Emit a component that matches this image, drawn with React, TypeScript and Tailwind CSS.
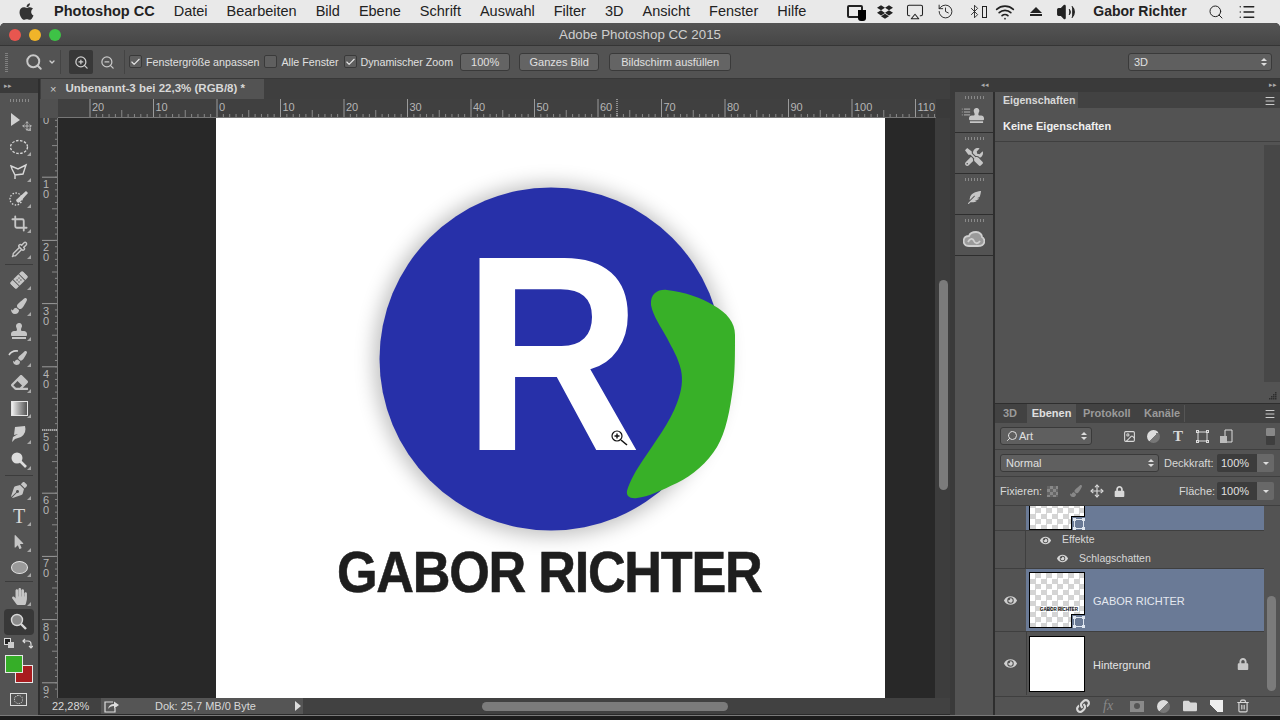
import type { ReactNode } from 'react';
import {
  Airplay,
  Bluetooth,
  Crop,
  History,
  List,
  Pipette,
  Search,
  Wifi,
  Volume2,
  ZoomIn,
  ZoomOut,
  Check,
  Move,
  ChevronDown,
  Trash2,
  Menu,
  ImageIcon,
} from 'lucide-react';
import {
  FaApple,
  FaDropbox,
  FaBandAid,
  FaPaintBrush,
  FaStamp,
  FaEraser,
  FaPenNib,
  FaMousePointer,
  FaHandPaper,
  FaEye,
  FaLock,
  FaFolder,
  FaLink,
  FaTools,
  FaFeatherAlt,
} from 'react-icons/fa';

const menuItems = ['Datei', 'Bearbeiten', 'Bild', 'Ebene', 'Schrift', 'Auswahl', 'Filter', '3D', 'Ansicht', 'Fenster', 'Hilfe'];

const rulerTop = [-2, -1, 0, 1, 2, 3, 4, 5, 6, 7, 8, 9, 10, 11];
const rulerLeft = [1, 2, 3, 4, 5, 6, 7, 8, 9];

function Corner() {
  return <span className="absolute right-[3px] bottom-[3px] border-b-[4px] border-l-[4px] border-l-transparent border-b-[#a8a8a8]" />;
}

function Tool({ children, active }: { children: ReactNode; active?: boolean }) {
  return (
    <div className={`relative mx-[4px] h-[25.7px] flex items-center justify-center text-[#c6c6c6] rounded-sm ${active ? 'bg-[#383838]' : ''}`}>
      {children}
      {!active && <Corner />}
    </div>
  );
}

function ToolSep({ tight }: { tight?: boolean }) {
  return <div className={`mx-[5px] h-[1px] bg-[#3c3c3c] ${tight ? 'my-[1px]' : 'my-[2px]'}`} />;
}

function Toolbar() {
  return (
    <div className="w-[38px] shrink-0 bg-[#535353] flex flex-col">
      <div className="h-[14px] bg-[#3a3a3a] flex items-center pl-[4px] text-[7px] text-[#aaa]">▸▸</div>
      <div className="h-[15px] flex items-center justify-center">
        <div className="w-[19px] h-[3px] bg-[repeating-linear-gradient(90deg,#8a8a8a_0_1px,transparent_1px_3px)]" />
      </div>
      <Tool>
        <svg width="20" height="18" viewBox="0 0 20 18" fill="#d0d0d0">
          <path d="M2 1 L2 14 L11 8 Z" />
        </svg>
        <Move size={10} className="absolute left-[18px] top-[13px]" />
      </Tool>
      <Tool>
        <svg width="20" height="16" viewBox="0 0 20 16" fill="none" stroke="#d8d8d8" strokeWidth="1.3" strokeDasharray="2.5 1.5">
          <ellipse cx="10" cy="8" rx="8.5" ry="6.5" />
        </svg>
      </Tool>
      <Tool>
        <svg width="20" height="18" viewBox="0 0 20 18" fill="none" stroke="#d8d8d8" strokeWidth="1.4">
          <path d="M2 3 L9 6 L17 2 L14 11 L6 12 L3 6 Z M6 12 L6 16" />
        </svg>
      </Tool>
      <Tool>
        <svg width="20" height="18" viewBox="0 0 20 18" fill="none">
          <circle cx="7" cy="10" r="6" stroke="#d8d8d8" strokeWidth="1.3" strokeDasharray="1.5 1.5" />
          <path d="M7 11 L17 2 L19 4 L11 13 Q8 15 7 11 Z" fill="#d0d0d0" />
        </svg>
      </Tool>
      <Tool>
        <Crop size={17} strokeWidth={2.6} />
      </Tool>
      <Tool>
        <Pipette size={17} />
      </Tool>
      <ToolSep />
      <Tool>
        <FaBandAid size={18} className="-rotate-45" />
      </Tool>
      <Tool>
        <FaPaintBrush size={16} />
      </Tool>
      <Tool>
        <FaStamp size={16} />
      </Tool>
      <Tool>
        <FaPaintBrush size={14} className="translate-x-[1px] translate-y-[1px]" />
        <svg className="absolute left-[4px] top-[5px]" width="12" height="8" viewBox="0 0 12 8" fill="none" stroke="#d8d8d8" strokeWidth="1.6">
          <path d="M1 6 Q4 1 10 2" />
        </svg>
      </Tool>
      <Tool>
        <FaEraser size={17} />
      </Tool>
      <Tool>
        <div className="w-[17px] h-[15px] border border-[#e5e5e5] bg-gradient-to-r from-[#f0f0f0] to-[#555555]" />
      </Tool>
      <Tool>
        <svg width="18" height="18" viewBox="0 0 18 18" fill="#cfcfcf">
          <path d="M5 2 L15 1 Q17 8 11 12 L5 14 L2 17 L3 12 L8 9 L4 10 Z" />
        </svg>
      </Tool>
      <Tool>
        <svg width="18" height="18" viewBox="0 0 18 18" fill="none">
          <circle cx="7" cy="7" r="5.5" fill="#dcdcdc" />
          <path d="M10 10 L16 16" stroke="#dcdcdc" strokeWidth="2.6" />
        </svg>
      </Tool>
      <ToolSep />
      <Tool>
        <FaPenNib size={16} />
      </Tool>
      <Tool>
        <span className="font-['Liberation_Serif',serif] text-[20px] leading-none text-[#d8d8d8]">T</span>
      </Tool>
      <Tool>
        <FaMousePointer size={14} />
      </Tool>
      <Tool>
        <div className="w-[17px] h-[13px] rounded-[50%] bg-[#9a9a9a] border border-[#e5e5e5]" />
      </Tool>
      <ToolSep tight />
      <Tool>
        <FaHandPaper size={17} />
      </Tool>
      <Tool active>
        <svg width="18" height="18" viewBox="0 0 18 18" fill="none">
          <circle cx="7" cy="7" r="5.5" fill="#8a8a8a" stroke="#d8d8d8" strokeWidth="1.4" />
          <path d="M11 11 L16 16" stroke="#d8d8d8" strokeWidth="2.4" />
        </svg>
      </Tool>
      <div className="relative flex-1">
        <div className="absolute left-[4px] top-[3px] w-[7px] h-[7px] bg-[#222] border border-[#ddd]" />
        <div className="absolute left-[8px] top-[7px] w-[6px] h-[6px] bg-[#ccc]" />
        <svg className="absolute left-[22px] top-[3px]" width="11" height="11" viewBox="0 0 11 11" fill="none" stroke="#ddd" strokeWidth="1.2">
          <path d="M1 3 H6 Q9 3 9 6 V10 M3 1 L1 3 L3 5 M7 8 L9 10 L11 8" />
        </svg>
        <div className="absolute left-[15px] top-[30px] w-[18px] h-[18px] bg-[#a81c1f] border border-[#e8e8e8]" />
        <div className="absolute left-[5px] top-[20px] w-[18px] h-[18px] bg-[#36ae28] border border-[#e8e8e8]" />
        <div className="absolute left-[10px] top-[58px] w-[17px] h-[13px] border border-[#ddd] flex items-center justify-center">
          <div className="w-[9px] h-[9px] rounded-full border border-dotted border-[#ddd]" />
        </div>
      </div>
    </div>
  );
}

function HRuler() {
  return (
    <div className="h-[19px] flex bg-[#404040]">
      <div className="w-[18px] bg-[#505050]" />
      <svg width="892" height="19" viewBox="58 0 892 19" className="text-[11px] fill-[#b5b5b5]">
        {rulerTop.map((n) => {
          const x = 217 + n * 63.5;
          return (
            <g key={n}>
              <line x1={x} x2={x} y1="0" y2="18" stroke="#9a9a9a" />
              <text x={x + 2} y="12">{Math.abs(n * 10)}</text>
              {[1, 2, 3, 4, 5, 6, 7, 8, 9].map((k) => (
                <line key={k} x1={x + k * 6.35} x2={x + k * 6.35} y1={k === 5 ? 11 : 15} y2="18" stroke="#888" />
              ))}
            </g>
          );
        })}
        <line x1="58" x2="936" y1="18.5" y2="18.5" stroke="#777" />
        <line x1="617" x2="617" y1="0" y2="18" stroke="#ddd" strokeDasharray="1 1" />
        <rect x="936" y="0" width="14" height="19" fill="#3a3a3a" />
      </svg>
    </div>
  );
}

function VRuler() {
  return (
    <svg width="18" height="580" viewBox="0 118 18 580" className="shrink-0 bg-[#404040] text-[11px] fill-[#b5b5b5]">
      <text x="3" y="124">0</text>
      {rulerLeft.map((n) => {
        const y = 114 + n * 63.2;
        return (
          <g key={n}>
            <line x1="2" x2="18" y1={y} y2={y} stroke="#9a9a9a" />
            <text x="3" y={y + 11}>{n}</text>
            <text x="3" y={y + 21}>0</text>
          </g>
        );
      })}
      {Array.from({ length: 92 }, (_, i) => (
        <line key={i} x1={i % 10 === 5 ? 12 : 15} x2="18" y1={114 + i * 6.32} y2={114 + i * 6.32} stroke="#888" />
      ))}
      <line x1="17.5" x2="17.5" y1="118" y2="698" stroke="#777" />
      <line x1="2" x2="18" y1="430" y2="430" stroke="#ddd" strokeDasharray="1 1" />
    </svg>
  );
}

function Logo() {
  return (
    <svg width="669" height="580" viewBox="216 118 669 580" className="font-['Liberation_Sans',Arial,sans-serif]">
      <defs>
        <filter id="soft" x="-20%" y="-20%" width="140%" height="140%">
          <feGaussianBlur stdDeviation="10" />
        </filter>
      </defs>
      <circle cx="550" cy="360" r="176" fill="#000" opacity="0.25" filter="url(#soft)" />
      <circle cx="551" cy="359" r="171.5" fill="#2730a9" />
      <text transform="translate(463 450) scale(0.885 1)" fontSize="279" fontWeight="700" fill="#fff">R</text>
      <path
        d="M651 305 C650 293 659 289 667 290 C685 292 702 298 713 305 C727 313 735 322 735 335 C735 355 735 372 733 387 C730 410 726 432 717 447 C708 462 692 476 677 483 C662 490 648 497 637 498 C630 499 626 496 627 491 C629 483 636 470 643 460 C655 442 670 422 677 403 C682 390 683 380 681 370 C678 357 672 348 667 338 C661 327 653 316 651 305 Z"
        fill="#38b028"
      />
      <text transform="translate(337 592) scale(0.9 1)" fontSize="58" fontWeight="700" fill="#1e1e1e" stroke="#1e1e1e" strokeWidth="0.6" textLength="473" lengthAdjust="spacing">GABOR RICHTER</text>
      <circle cx="617" cy="436" r="5" fill="#fff" stroke="#111" strokeWidth="1.2" />
      <path d="M614.5 436 H619.5 M617 433.5 V438.5" stroke="#111" strokeWidth="1.4" />
      <path d="M621 440 L627 445" stroke="#111" strokeWidth="1.6" />
    </svg>
  );
}

function DocumentArea() {
  return (
    <div className="w-[910px] shrink-0 flex flex-col bg-[#2a2a2a]">
      <div className="h-[20px] bg-[#3f3f3f] pl-[1px]">
        <div className="w-[223px] h-[20px] bg-[#535353] flex items-center text-[11.5px] font-bold text-[#d8d8d8] whitespace-nowrap">
          <span className="ml-[9px] mr-[9px] text-[11px] font-normal text-[#ccc]">×</span>
          Unbenannt-3 bei 22,3% (RGB/8) *
        </div>
      </div>
      <HRuler />
      <div className="h-[580px] flex">
        <VRuler />
        <div className="w-[877px] bg-[#282828] flex">
          <div className="w-[158px]" />
          <div className="w-[669px] h-[580px] bg-white overflow-hidden">
            <Logo />
          </div>
        </div>
        <div className="flex-1 bg-[#3d3d3d] relative">
          <div className="absolute left-[4px] top-[162px] w-[9px] h-[210px] rounded-full bg-[#7b7b7b]" />
        </div>
      </div>
      <div className="h-[16px] flex bg-[#414141] text-[11px] text-[#d8d8d8]">
        <div className="w-[61px] pl-[12px] leading-[16px]">22,28%</div>
        <div className="w-[202px] bg-[#555555] flex items-center">
          <svg width="16" height="13" viewBox="0 0 16 13" fill="none" stroke="#ddd" strokeWidth="1.2" className="ml-[3px]">
            <path d="M9 2 H1 V12 H11 V8" />
            <path d="M4 9 Q5 4 10 4 V1.5 L15 5 L10 8.5 V6 Q6 6 4 9 Z" fill="#ddd" stroke="none" />
          </svg>
          <span className="ml-[35px]">Dok: 25,7 MB/0 Byte</span>
          <span className="ml-[39px] border-y-[5px] border-l-[6px] border-y-transparent border-l-[#ddd]" />
        </div>
        <div className="flex-1 flex items-center pl-[179px]">
          <div className="w-[246px] h-[9px] rounded-full bg-[#7b7b7b]" />
        </div>
      </div>
    </div>
  );
}

function DockBox({ children }: { children: ReactNode }) {
  return (
    <div className="h-[41px] border-b border-[#2e2e2e] bg-[#535353] flex flex-col items-center text-[#c6c6c6]">
      <div className="mt-[4px] w-[19px] h-[3px] bg-[repeating-linear-gradient(90deg,#8a8a8a_0_1px,transparent_1px_3px)]" />
      <div className="flex-1 flex items-center justify-center">{children}</div>
    </div>
  );
}

function Dock() {
  return (
    <div className="w-[38px] shrink-0 bg-[#535353] flex flex-col">
      <DockBox>
        <div className="relative">
          <FaStamp size={15} className="ml-[5px]" />
          <List size={10} className="absolute -left-[3px] -top-[1px]" />
        </div>
      </DockBox>
      <DockBox>
        <FaTools size={18} />
      </DockBox>
      <DockBox>
        <FaFeatherAlt size={13} />
      </DockBox>
      <DockBox>
        <svg width="22" height="16" viewBox="0 0 22 16" fill="none" stroke="#cfcfcf" strokeWidth="1.8">
          <path d="M6 15 C1 15 0 11 1 8 C2 5 4 5 6 5 C7 2 10 1 13 1 C17 1 19 4 19 6 C21 7 22 10 21 12 C20 15 17 15 15 15 Z" fill="#9a9a9a" />
          <path d="M5 11 C7 7 10 7 11 10 C12 13 15 13 17 10" />
        </svg>
      </DockBox>
    </div>
  );
}

function UpDown() {
  return (
    <span className="flex flex-col gap-[2px]">
      <span className="border-x-[3px] border-b-[3px] border-x-transparent border-b-[#ddd]" />
      <span className="border-x-[3px] border-t-[3px] border-x-transparent border-t-[#ddd]" />
    </span>
  );
}

function Select({ label, className, icon }: { label: string; className: string; icon?: ReactNode }) {
  return (
    <div className={`h-[18px] flex items-center justify-between rounded-[3px] border border-[#3a3a3a] bg-[#5f5f5f] pl-[5px] pr-[4px] text-[11px] text-[#e0e0e0] ${className}`}>
      <span className="flex items-center gap-[1px]">
        {icon}
        {label}
      </span>
      <UpDown />
    </div>
  );
}

function PercentInput() {
  return (
    <div className="w-[57px] h-[18px] flex rounded-[2px] overflow-hidden text-[11px] text-[#e0e0e0]">
      <div className="w-[40px] bg-[#3c3c3c] pl-[4px] leading-[18px]">100%</div>
      <div className="flex-1 bg-[#686868] flex items-center justify-center">
        <span className="border-x-[3px] border-t-[3px] border-x-transparent border-t-[#ddd]" />
      </div>
    </div>
  );
}

function Thumb({ children, checker }: { children?: ReactNode; checker?: boolean }) {
  return (
    <div className={`relative w-[56px] h-[56px] border border-black ${checker ? 'bg-[repeating-conic-gradient(#d4d4d4_0_25%,#ffffff_0_50%)] bg-[length:11px_11px]' : 'bg-white'}`}>
      {children}
    </div>
  );
}

function SmartBadge() {
  return (
    <div className="absolute -right-[1px] -bottom-[1px] w-[14px] h-[14px] bg-[#6a7a96] border-l border-t border-black flex items-center justify-center">
      <svg width="12" height="12" viewBox="0 0 12 12" fill="none" stroke="#dfe6f0">
        <rect x="1.5" y="1.5" width="9" height="9" />
        <rect x="0.5" y="0.5" width="2" height="2" />
        <rect x="9.5" y="0.5" width="2" height="2" />
        <rect x="0.5" y="9.5" width="2" height="2" />
        <rect x="9.5" y="9.5" width="2" height="2" />
      </svg>
    </div>
  );
}

function EyeCell() {
  return (
    <div className="w-[31px] shrink-0 flex items-center justify-center text-[#d0d0d0]">
      <FaEye size={13} />
    </div>
  );
}

function Panels() {
  return (
    <div className="w-[285px] shrink-0 flex flex-col gap-[1px] bg-[#2e2e2e] text-[#d8d8d8]">
      <div className="h-[311px] bg-[#535353] flex flex-col">
        <div className="h-[16px] bg-[#424242] flex justify-between">
          <div className="w-[83px] bg-[#535353] pl-[8px] text-[10.6px] font-bold leading-[16px] text-[#d8d8d8]">Eigenschaften</div>
          <Menu size={12} className="mr-[4px] mt-[3px] text-[#ccc]" />
        </div>
        <div className="h-[34px] border-b border-[#3f3f3f] pl-[8px] pt-[11px] text-[11px] font-bold leading-[14px] text-[#f0f0f0]">Keine Eigenschaften</div>
        <div className="flex-1 relative">
          <div className="absolute right-0 top-[3px] w-[16px] h-[237px] bg-[#474747]" />
          <svg className="absolute right-[3px] bottom-[3px]" width="9" height="9" viewBox="0 0 9 9" fill="#2e2e2e">
            <rect x="7" y="1" width="1.5" height="1.5" />
            <rect x="5" y="3" width="1.5" height="1.5" />
            <rect x="7" y="3" width="1.5" height="1.5" />
            <rect x="3" y="5" width="1.5" height="1.5" />
            <rect x="5" y="5" width="1.5" height="1.5" />
            <rect x="7" y="5" width="1.5" height="1.5" />
            <rect x="1" y="7" width="1.5" height="1.5" />
            <rect x="3" y="7" width="1.5" height="1.5" />
            <rect x="5" y="7" width="1.5" height="1.5" />
            <rect x="7" y="7" width="1.5" height="1.5" />
          </svg>
        </div>
      </div>
      <div className="flex-1 bg-[#535353] flex flex-col">
        <div className="h-[19px] bg-[#424242] flex items-center text-[11px] font-bold text-[#9a9a9a]">
          <span className="w-[32px] pl-[8px]">3D</span>
          <span className="w-[49px] h-[19px] bg-[#535353] text-center leading-[19px] text-[#e0e0e0]">Ebenen</span>
          <span className="ml-[7px] w-[61px]">Protokoll</span>
          <span className="w-[41px] border-r border-[#555]">Kanäle</span>
          <Menu size={12} className="ml-auto mr-[4px] text-[#ccc]" />
        </div>
        <div className="h-[27px] border-b border-[#3f3f3f] flex items-center pl-[5px] text-[#d8d8d8]">
          <Select label="Art" className="w-[92px]" icon={<Search size={12} className="-scale-x-100" />} />
          <div className="ml-[31px] flex items-center gap-[11.3px]">
            <ImageIcon size={13} />
            <div className="w-[13px] h-[13px] rounded-full bg-[linear-gradient(135deg,#ddd_50%,#777_50%)]" />
            <span className="w-[13px] text-center font-['Liberation_Serif',serif] text-[15px] leading-none font-bold">T</span>
            <svg width="13" height="13" viewBox="0 0 13 13" fill="none" stroke="#ddd">
              <rect x="2" y="2" width="9" height="9" />
              <rect x="0.5" y="0.5" width="2" height="2" />
              <rect x="10.5" y="0.5" width="2" height="2" />
              <rect x="0.5" y="10.5" width="2" height="2" />
              <rect x="10.5" y="10.5" width="2" height="2" />
            </svg>
            <svg width="13" height="14" viewBox="0 0 13 14">
              <path d="M5 1 H12 V13 H5 Z" fill="none" stroke="#ddd" />
              <path d="M0 7 H7 V14 H0 Z" fill="#bbb" />
            </svg>
          </div>
          <div className="ml-auto mr-[5px] w-[9px] h-[17px] bg-[#3e3e3e] rounded-[1px]">
            <div className="h-[8px] bg-[#888] rounded-[1px]" />
          </div>
        </div>
        <div className="h-[27px] border-b border-[#3f3f3f] flex items-center pl-[5px] text-[11px]">
          <Select label="Normal" className="w-[159px]" />
          <span className="ml-[5px] w-[53px]">Deckkraft:</span>
          <PercentInput />
        </div>
        <div className="h-[29px] border-b border-[#3f3f3f] flex items-center pl-[5px] text-[11px]">
          <span className="w-[47px]">Fixieren:</span>
          <div className="w-[11px] h-[11px] bg-[repeating-conic-gradient(#888_0_25%,#666_0_50%)] bg-[length:6px_6px]" />
          <FaPaintBrush size={12} className="ml-[12px] text-[#888]" />
          <Move size={14} className="ml-[8px]" />
          <FaLock size={11} className="ml-[10px]" />
          <span className="ml-[54px] w-[38px]">Fläche:</span>
          <PercentInput />
        </div>
        <div className="flex-1 flex min-h-0">
          <div className="w-[269px] flex flex-col text-[11px]">
            <div className="h-[25px] border-b border-[#3f3f3f] flex overflow-hidden">
              <div className="w-[31px]" />
              <div className="flex-1 bg-[#6a7a96] pl-[3px] -mt-[32px]">
                <Thumb checker>
                  <SmartBadge />
                </Thumb>
              </div>
            </div>
            <div className="h-[18px] flex items-center text-[10.5px]">
              <div className="w-[31px] h-full border-r border-[#3f3f3f]" />
              <FaEye size={11} className="ml-[14px] mr-[11px]" />
              Effekte
            </div>
            <div className="h-[20px] border-b border-[#3f3f3f] flex items-center text-[10.5px]">
              <div className="w-[31px] h-full border-r border-[#3f3f3f]" />
              <FaEye size={11} className="ml-[31px] mr-[11px]" />
              Schlagschatten
            </div>
            <div className="h-[63px] border-b border-[#3f3f3f] flex">
              <EyeCell />
              <div className="flex-1 bg-[#6a7a96] flex items-center pl-[3px] text-[#e4e8f0]">
                <Thumb checker>
                  <span className="absolute left-[10px] top-[35px] text-[4.5px] font-bold leading-none whitespace-nowrap text-black">GABOR RICHTER</span>
                  <SmartBadge />
                </Thumb>
                <span className="ml-[8px] mt-[3px]">GABOR RICHTER</span>
              </div>
            </div>
            <div className="h-[63px] flex">
              <EyeCell />
              <div className="flex-1 border-l border-[#3f3f3f] flex items-center pl-[2px]">
                <Thumb />
                <span className="ml-[8px] mt-[3px] text-[#e4e4e4]">Hintergrund</span>
                <FaLock size={12} className="ml-[87px] text-[#c8c8c8]" />
              </div>
            </div>
          </div>
          <div className="flex-1 relative">
            <div className="absolute left-[3px] top-[90px] w-[9px] h-[95px] rounded-full bg-[#7b7b7b]" />
          </div>
        </div>
        <div className="h-[19px] border-t border-[#3f3f3f] flex items-center pl-[81px] gap-[13px] text-[#d8d8d8]">
          <FaLink size={14} />
          <span className="w-[14px] font-['Liberation_Serif',serif] italic text-[14px] leading-none text-[#888]">fx</span>
          <div className="w-[14px] h-[11px] bg-[#8a8a8a] flex items-center justify-center">
            <div className="w-[6px] h-[6px] rounded-full bg-[#555]" />
          </div>
          <div className="w-[13px] h-[13px] rounded-full bg-[linear-gradient(135deg,#ddd_50%,#777_50%)]" />
          <FaFolder size={14} />
          <div className="w-[13px] h-[12px] bg-[linear-gradient(225deg,#eee_70%,#555_70%)]" />
          <Trash2 size={14} />
        </div>
      </div>
    </div>
  );
}

function Checkbox({ checked, label }: { checked?: boolean; label: string }) {
  return (
    <div className="flex items-center gap-[4px] text-[10.7px] text-[#e0e0e0] whitespace-nowrap">
      <div className="w-[13px] h-[13px] rounded-[2px] border border-[#3a3a3a] bg-[#5f5f5f] flex items-center justify-center">
        {checked && <Check size={12} strokeWidth={2.5} className="text-[#e6e6e6]" />}
      </div>
      {label}
    </div>
  );
}

function OptButton({ label, className }: { label: string; className: string }) {
  return (
    <div className={`h-[18px] rounded-[3px] border border-[#3a3a3a] bg-[#646464] text-center text-[11px] leading-[16px] text-[#e0e0e0] ${className}`}>{label}</div>
  );
}

export default function App() {
  return (
    <div className="w-[1280px] h-[720px] overflow-hidden flex flex-col bg-[#e8e8e8] font-['Liberation_Sans',Arial,sans-serif]">
      {/* menu bar */}
      <div className="h-[23px] shrink-0 bg-[#e9e9e9] flex items-center pl-[17px] text-[14.5px] text-[#222]">
        <FaApple size={19} className="text-[#333]" />
        <span className="ml-[18px] font-bold text-[#222]">Photoshop CC</span>
        <div className="ml-[19px] flex gap-[19px]">
          {menuItems.map((m) => (
            <span key={m}>{m}</span>
          ))}
        </div>
        <div className="ml-[41px] flex items-center text-[#222]">
          <div className="relative w-[16px] h-[13px] border-2 border-[#222] rounded-[2px]">
            <div className="absolute right-[-5px] top-[3px] w-[8px] h-[11px] bg-black rounded-b-[3px]" />
          </div>
          <FaDropbox size={16} className="ml-[14px]" />
          <Airplay size={18} strokeWidth={1.4} className="ml-[13px]" />
          <History size={17} strokeWidth={1.3} className="ml-[13px]" />
          <div className="ml-[13px] flex items-center">
            <Bluetooth size={15} strokeWidth={1.4} />
            <div className="w-[5px] h-[12px] border border-[#222]" />
          </div>
          <Wifi size={20} strokeWidth={2} className="ml-[8px]" />
          <div className="ml-[15px] flex flex-col items-center gap-[1px]">
            <div className="border-x-[6px] border-b-[6px] border-x-transparent border-b-[#222]" />
            <div className="w-[12px] h-[2px] bg-[#222]" />
          </div>
          <Volume2 size={20} strokeWidth={1.4} fill="#222" className="ml-[14px]" />
        </div>
        <span className="ml-[17px] text-[14px] font-bold">Gabor Richter</span>
        <Search size={16} strokeWidth={1.5} className="ml-[21px]" />
        <List size={18} strokeWidth={1.8} className="ml-[14px]" />
      </div>

      {/* window */}
      <div className="flex-1 min-h-0 flex flex-col rounded-t-[5px] overflow-hidden bg-[#1a1a1a]">
        <div className="relative h-[23px] pt-[2px] shrink-0 bg-gradient-to-b from-[#555555] to-[#464646] border-b border-[#353535] flex items-center justify-center text-[13.3px] text-[#cfcfcf]">
          <div className="absolute left-[9px] top-[6px] flex gap-[8px]">
            <div className="w-[12px] h-[12px] rounded-full bg-[#e8564f]" />
            <div className="w-[12px] h-[12px] rounded-full bg-[#f0b429]" />
            <div className="w-[12px] h-[12px] rounded-full bg-[#3ec246]" />
          </div>
          Adobe Photoshop CC 2015
        </div>

        <div className="h-[33px] shrink-0 bg-[#535353] border-b border-[#383838] flex items-center pl-[5px]">
          <div className="w-[3px] h-[20px] bg-[repeating-linear-gradient(0deg,#808080_0_1px,transparent_1px_2px)]" />
          <Search size={18} strokeWidth={2.6} className="ml-[17px] text-[#c8c8c8]" />
          <ChevronDown size={8} strokeWidth={4} className="ml-[5px] text-[#ccc]" />
          <div className="ml-[4px] w-[1px] h-[24px] bg-[#444]" />
          <div className="ml-[8px] w-[24px] h-[24px] rounded-[2px] bg-[#383838] flex items-center justify-center">
            <ZoomIn size={15} className="text-[#d0d0d0]" />
          </div>
          <ZoomOut size={15} className="ml-[7px] text-[#c8c8c8]" />
          <div className="ml-[9px] w-[1px] h-[24px] bg-[#444]" />
          <div className="ml-[4px]">
            <Checkbox checked label="Fenstergröße anpassen" />
          </div>
          <div className="ml-[5px]">
            <Checkbox label="Alle Fenster" />
          </div>
          <div className="ml-[5px]">
            <Checkbox checked label="Dynamischer Zoom" />
          </div>
          <OptButton label="100%" className="ml-[7px] w-[50px]" />
          <OptButton label="Ganzes Bild" className="ml-[9px] w-[80px]" />
          <OptButton label="Bildschirm ausfüllen" className="ml-[10px] w-[122px]" />
          <Select label="3D" className="ml-auto mr-[8px] w-[144px]" />
        </div>

        <div className="h-[636px] shrink-0 flex">
          <Toolbar />
          <div className="w-[2px] shrink-0 bg-[#2e2e2e]" />
          <DocumentArea />
          <div className="w-[5px] shrink-0 bg-[#3a3a3a]" />
          <div className="w-[325px] shrink-0 flex flex-col">
            <div className="h-[13px] shrink-0 bg-[#3a3a3a] flex items-center justify-between pl-[26px] pr-[3px] text-[7px] text-[#aaa]">
              <span>◂◂</span>
              <span>▸▸</span>
            </div>
            <div className="flex-1 min-h-0 flex">
              <Dock />
              <div className="w-[2px] shrink-0 bg-[#2e2e2e]" />
              <Panels />
            </div>
          </div>
        </div>
        <div className="h-[1px] shrink-0 bg-[#7a7a7a]" />
        <div className="flex-1 bg-[#1c1c1c]" />
      </div>
    </div>
  );
}
